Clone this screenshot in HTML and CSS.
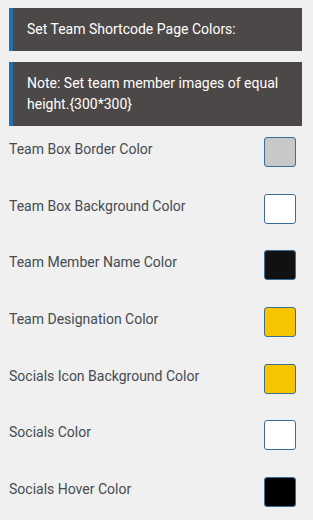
FILE: index.html
```html
<!DOCTYPE html>
<html lang="en">
<head>
  <meta charset="UTF-8">
  <meta name="viewport" content="width=device-width, initial-scale=1.0">
  <title>Team Shortcode Colors</title>
  <link rel="stylesheet" href="styles.css">
</head>
<body>
  <div class="wrap">
    <div class="notice">Set Team Shortcode Page Colors:</div>
    <div class="notice">Note: Set team member images of equal height.{300*300}</div>

    <div class="color-list">
      <div class="color-row">
        <label class="color-label">Team Box Border Color</label>
        <span class="swatch swatch-gray"></span>
      </div>
      <div class="color-row">
        <label class="color-label">Team Box Background Color</label>
        <span class="swatch swatch-white"></span>
      </div>
      <div class="color-row">
        <label class="color-label">Team Member Name Color</label>
        <span class="swatch swatch-dark"></span>
      </div>
      <div class="color-row">
        <label class="color-label">Team Designation Color</label>
        <span class="swatch swatch-yellow"></span>
      </div>
      <div class="color-row">
        <label class="color-label">Socials Icon Background Color</label>
        <span class="swatch swatch-yellow"></span>
      </div>
      <div class="color-row">
        <label class="color-label">Socials Color</label>
        <span class="swatch swatch-white"></span>
      </div>
      <div class="color-row">
        <label class="color-label">Socials Hover Color</label>
        <span class="swatch swatch-black"></span>
      </div>
    </div>
  </div>
</body>
</html>
```

FILE: styles.css
```css
body {
  margin: 0;
  background-color: #f0f0f0;
  font-family: Roboto, "Liberation Sans", sans-serif;
  font-size: 14px;
}

.wrap {
  padding: 8px 11px 0 9px;
}

.notice {
  background-color: #4d4848;
  border-left: 4px solid #2271b1;
  color: #fff;
  padding: 11px 14px;
  line-height: 21px;
  margin-bottom: 11px;
}

.color-row {
  height: 56.67px;
  display: flex;
  justify-content: space-between;
  align-items: flex-start;
}

.color-label {
  padding-top: 2px;
  line-height: 20px;
  color: #454b51;
}

.swatch {
  margin-right: 6px;
  width: 30px;
  height: 28px;
  border: 1px solid #3b6e97;
  border-radius: 3px;
}

.swatch-gray { background-color: #c8c8c8; }
.swatch-white { background-color: #fff; }
.swatch-dark { background-color: #111; }
.swatch-yellow { background-color: #f6c500; }
.swatch-black { background-color: #000; }
```
